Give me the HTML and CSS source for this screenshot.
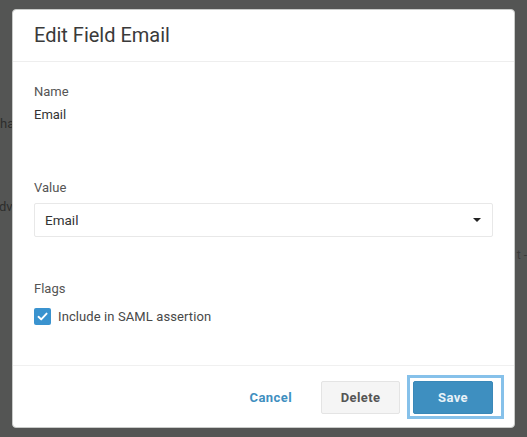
FILE: index.html
```html
<!DOCTYPE html>
<html lang="en">
<head>
<meta charset="utf-8">
<title>Edit Field Email</title>
<link rel="stylesheet" href="styles.css">
</head>
<body>
<div class="page">
  <div class="bg-line bg-line-1">has</div>
  <div class="bg-line bg-line-2">dv</div>
  <div class="bg-line bg-line-3"><span class="bg-right">t -</span></div>
</div>
<div class="overlay">
  <div class="modal">
    <div class="modal-header">
      <h1 class="modal-title">Edit Field Email</h1>
    </div>
    <div class="modal-body">
      <div class="field field-name">
        <div class="label">Name</div>
        <div class="static">Email</div>
      </div>
      <div class="field field-value">
        <div class="label">Value</div>
        <div class="select">
          <span class="select-text">Email</span>
          <span class="caret"></span>
        </div>
      </div>
      <div class="field field-flags">
        <div class="label">Flags</div>
        <label class="check-row">
          <span class="checkbox">
            <svg width="13" height="13" viewBox="0 0 13 13"><path d="M2.5 6.8 L5.2 9.4 L10.6 3.6" fill="none" stroke="#fff" stroke-width="1.9" stroke-linecap="round" stroke-linejoin="round"/></svg>
          </span>
          <span class="check-text">Include in SAML assertion</span>
        </label>
      </div>
    </div>
    <div class="modal-footer">
      <button class="btn btn-link">Cancel</button>
      <button class="btn btn-default">Delete</button>
      <span class="focus-ring"><button class="btn btn-primary">Save</button></span>
    </div>
  </div>
</div>
</body>
</html>
```

FILE: styles.css
```css
* { box-sizing: border-box; }
html, body {
  margin: 0;
  padding: 0;
  width: 527px;
  height: 437px;
  overflow: hidden;
}
body {
  background: #545554;
  font-family: Roboto, "Liberation Sans", sans-serif;
  position: relative;
}
.page {
  padding-top: 115px;
  color: #2c2d2c;
  font-size: 13px;
  line-height: 18px;
}
.bg-line { height: 18px; }
.bg-line-1 { margin-left: 0; }
.bg-line-2 { margin-top: 65px; margin-left: -1px; }
.bg-line-3 { margin-top: 30px; display: flex; justify-content: flex-end; }
.bg-right { margin-right: 0; color: #3a3b3a; font-size: 12px; }

.overlay {
  position: absolute;
  inset: 0;
  padding: 9px 12px 9px 12px;
}
.modal {
  width: 503px;
  height: 419px;
  background: #fff;
  border-radius: 4px;
  border: 1px solid #c9cbc9;
  display: flex;
  flex-direction: column;
}
.modal-header {
  padding: 13px 21px 14px;
  border-bottom: 1px solid #eeeeee;
}
.modal-title {
  margin: 0;
  font-size: 20px;
  line-height: 24px;
  font-weight: 400;
  color: #3a3a3a;
}
.modal-body {
  padding: 21px 21px 0;
  flex: 1;
}
.label {
  font-size: 13px;
  line-height: 18px;
  color: #555;
}
.static {
  margin-top: 5px;
  font-size: 13px;
  line-height: 18px;
  color: #333;
}
.field-value { margin-top: 55px; }
.select {
  margin-top: 6px;
  height: 34px;
  border: 1px solid #e8e8e8;
  border-radius: 2px;
  display: flex;
  align-items: center;
  justify-content: space-between;
  padding: 0 11px 0 10px;
}
.select-text {
  font-size: 13.5px;
  color: #333;
}
.caret {
  width: 0;
  height: 0;
  border-left: 4px solid transparent;
  border-right: 4px solid transparent;
  border-top: 4px solid #222;
}
.field-flags { margin-top: 43px; }
.check-row {
  margin-top: 10px;
  display: flex;
  align-items: center;
  gap: 7px;
}
.checkbox {
  width: 17px;
  height: 17px;
  border-radius: 2px;
  background: #3a93cf;
  display: flex;
  align-items: center;
  justify-content: center;
}
.check-text {
  font-size: 13px;
  color: #484848;
  letter-spacing: 0.1px;
}
.modal-footer {
  border-top: 1px solid #f0f0f0;
  padding: 9px 10px 8px 21px;
  display: flex;
  justify-content: flex-end;
  align-items: center;
}
.btn {
  font-family: Roboto, "Liberation Sans", sans-serif;
  font-size: 13px;
  font-weight: 700;
  letter-spacing: 0.4px;
  height: 33px;
  border-radius: 2px;
  cursor: pointer;
}
.btn-link {
  background: none;
  border: none;
  color: #3f8fbf;
  padding: 0;
  margin-right: 29px;
}
.btn-default {
  width: 79px;
  background: #f5f5f5;
  border: 1px solid #e4e4e4;
  color: #555;
  margin-right: 7px;
}
.focus-ring {
  display: flex;
  border: 3px solid #86c1ea;
  padding: 3px 8px 2px 3px;
}
.btn-primary {
  width: 80px;
  background: #3e8fc0;
  border: 1px solid #3a88b8;
  color: #e8f2f8;
}
```
